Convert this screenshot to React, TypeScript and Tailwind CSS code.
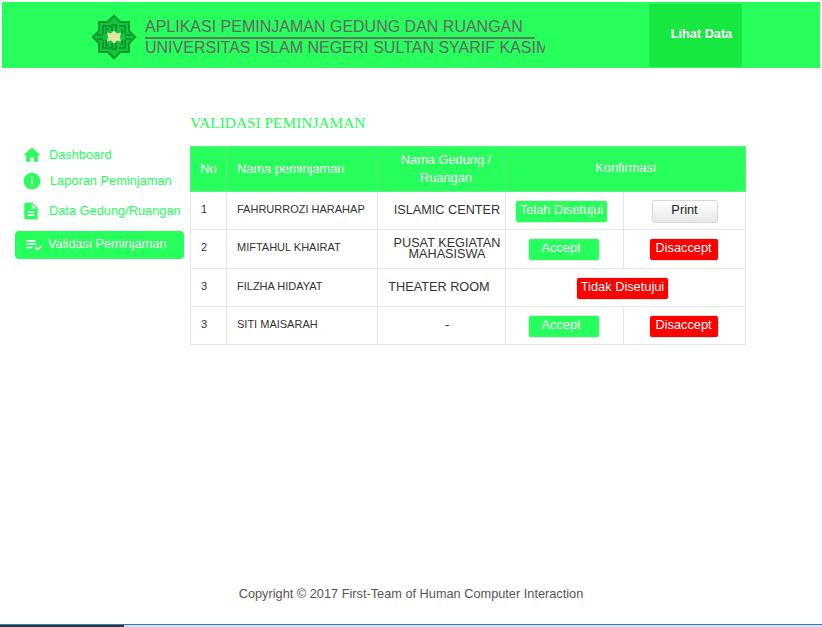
import { MdHome, MdInfo, MdDescription, MdPlaylistAddCheck } from "react-icons/md";

function Logo() {
  return (
    <svg width="46" height="46" viewBox="0 0 46 46" className="shrink-0">
      <g fill="#12c43c" stroke="#0a9a2c" strokeWidth="2">
        <rect x="8" y="8" width="30" height="30" />
        <rect x="8" y="8" width="30" height="30" transform="rotate(45 23 23)" />
      </g>
      <rect x="9" y="9" width="28" height="28" fill="#12c43c" />
      <g fill="none" stroke="#0a8f2a" strokeWidth="1.6">
        <path d="M12 20v-8h8M15 20v-5h3M21 17v-6h4v6M28 12h6v8M31 15v5" />
        <path d="M12 26v8h8M15 26v5h3M21 29v6h4v-6M28 34h6v-8M31 31v-5" />
        <path d="M6 21h6M6 25h6M34 21h6M34 25h6" />
      </g>
      <path d="M23 16.500l3 3 4-1-1 4.500 1 4.500-4-1-3 3-3-3-4 1 1-4.500-1-4.500 4 1z" fill="#e3e8a0" />
    </svg>
  );
}

function Btn({ label, color, width, shift }: { label: string; color: "green" | "red"; width: string; shift?: string }) {
  return (
    <span
      className={`inline-block h-[23px] whitespace-nowrap rounded-[3px] border border-[#e4e4e4] text-center align-middle text-[12.8px] leading-[18px] text-white ${width} ${shift ?? ""} ${
        color === "green" ? "bg-[#27ff5c]" : "bg-[#ff0000]"
      }`}
    >
      {label}
    </span>
  );
}

const cell = "border border-[#e6e6e6] p-0";
const nameCell = `${cell} pl-[10px] pb-[3px] text-left text-[11px] text-[#333]`;
const noCell = `${cell} pl-[10px] pb-[3px] text-left text-[11px] text-[#333]`;
const roomText = "text-[12.7px] text-[#333]";

export default function App() {
  return (
    <div className="flex h-[627px] flex-col overflow-hidden bg-white font-['Liberation_Sans',sans-serif]">
      <header className="mx-[2px] mt-[2px] flex h-[66px] shrink-0 items-center bg-[#27ff5c]">
        <div className="ml-[89px] mr-[8px] mt-[4px]">
          <Logo />
        </div>
        <div className="w-[400px] overflow-hidden pt-[4px] text-[16px] leading-[19px] text-[#666]">
          <div className="w-[390px] whitespace-nowrap border-b-2 border-[#5f7a63] pb-[1px]">APLIKASI PEMINJAMAN GEDUNG DAN RUANGAN</div>
          <div className="-mt-[1px] whitespace-nowrap">UNIVERSITAS ISLAM NEGERI SULTAN SYARIF KASIM</div>
        </div>
        <div className="ml-[104px] flex h-[63px] w-[93px] items-center justify-center bg-[#17e841] pl-[12px] text-[12.7px] font-bold text-white">
          Lihat Data
        </div>
      </header>

      <main className="flex flex-1">
        <nav className="box-content w-[175px] shrink-0 pl-[15px] pt-[74px] text-[12.8px] text-[#27ff5c]">
          <div className="flex h-[26px] items-center pl-[7px]">
            <MdHome size={20} />
            <span className="ml-[7px]">Dashboard</span>
          </div>
          <div className="flex h-[26px] items-center pl-[7px]">
            <MdInfo size={20} />
            <span className="ml-[8px]">Laporan Peminjaman</span>
          </div>
          <div className="mt-[3px] flex h-[28px] items-center pl-[6px]">
            <MdDescription size={20} />
            <span className="ml-[8px] whitespace-nowrap">Data Gedung/Ruangan</span>
          </div>
          <div className="mt-[6px] flex h-[28px] w-[169px] items-center rounded-[4px] bg-[#27ff5c] pl-[9px] text-white">
            <MdPlaylistAddCheck size={20} />
            <span className="ml-[4px] -translate-y-[1px] whitespace-nowrap">Validasi Peminjaman</span>
          </div>
        </nav>

        <section className="pt-[44px]">
          <h1 className="font-['Liberation_Serif',serif] text-[15.4px] leading-[22px] text-[#27ff5c]">VALIDASI PEMINJAMAN</h1>
          <table className="mt-[12px] w-[555px] table-fixed border-collapse">
            <colgroup>
              <col className="w-[36px]" />
              <col className="w-[151px]" />
              <col className="w-[128px]" />
              <col className="w-[118px]" />
              <col className="w-[122px]" />
            </colgroup>
            <thead>
              <tr className="h-[45px] bg-[#27ff5c] text-[12.8px] text-white">
                <th className="border border-[#5cf07f] font-normal">No</th>
                <th className="border border-[#5cf07f] pl-[10px] text-left font-normal">Nama peminjaman</th>
                <th className="border border-[#5cf07f] pl-[9px] font-normal leading-[18px]">
                  Nama Gedung /<br />Ruangan
                </th>
                <th colSpan={2} className="border border-[#5cf07f] pb-[2px] font-normal">Konfirmasi</th>
              </tr>
            </thead>
            <tbody className="text-center">
              <tr className="h-[38px]">
                <td className={noCell}>1</td>
                <td className={nameCell}>FAHRURROZI HARAHAP</td>
                <td className={`${cell} ${roomText} pl-[11px]`}>ISLAMIC CENTER</td>
                <td className={`${cell} pr-[6px]`}>
                  <Btn label="Telah Disetujui" color="green" width="w-[93px]" />
                </td>
                <td className={cell}>
                  <span className="inline-block h-[23px] w-[66px] rounded-[3px] border border-[#d8d8d8] bg-gradient-to-b from-white to-[#e8e8e8] align-middle text-[12.8px] leading-[18px] text-[#222]">
                    Print
                  </span>
                </td>
              </tr>
              <tr className="h-[39px]">
                <td className={noCell}>2</td>
                <td className={nameCell}>MIFTAHUL KHAIRAT</td>
                <td className={`${cell} ${roomText} pl-[11px] leading-[11px]`}>
                  PUSAT KEGIATAN
                  <br />
                  MAHASISWA
                </td>
                <td className={`${cell} pr-[1px]`}>
                  <Btn label="Accept" color="green" width="w-[72px]" shift="pr-[6px]" />
                </td>
                <td className={`${cell} pr-[2px]`}>
                  <Btn label="Disaccept" color="red" width="w-[70px]" />
                </td>
              </tr>
              <tr className="h-[38px]">
                <td className={noCell}>3</td>
                <td className={nameCell}>FILZHA HIDAYAT</td>
                <td className={`${cell} ${roomText} pr-[5px]`}>THEATER ROOM</td>
                <td colSpan={2} className={`${cell} pr-[6px]`}>
                  <Btn label="Tidak Disetujui" color="red" width="w-[93px]" />
                </td>
              </tr>
              <tr className="h-[38px]">
                <td className={noCell}>3</td>
                <td className={nameCell}>SITI MAISARAH</td>
                <td className={`${cell} ${roomText} pl-[11px]`}>-</td>
                <td className={`${cell} pr-[1px]`}>
                  <Btn label="Accept" color="green" width="w-[72px]" shift="pr-[6px]" />
                </td>
                <td className={`${cell} pr-[2px]`}>
                  <Btn label="Disaccept" color="red" width="w-[70px]" />
                </td>
              </tr>
            </tbody>
          </table>
        </section>
      </main>

      <footer className="pb-[20px] text-center text-[12.75px] leading-[20px] text-[#555]">
        Copyright © 2017 First-Team of Human Computer Interaction
      </footer>
      <div className="h-[1px] shrink-0 bg-[#2a7bc0]" />
      <div className="flex h-[2px] shrink-0">
        <div className="w-[124px] bg-[#333]" />
        <div className="flex-1 bg-[#cfe3f5]" />
      </div>
    </div>
  );
}
